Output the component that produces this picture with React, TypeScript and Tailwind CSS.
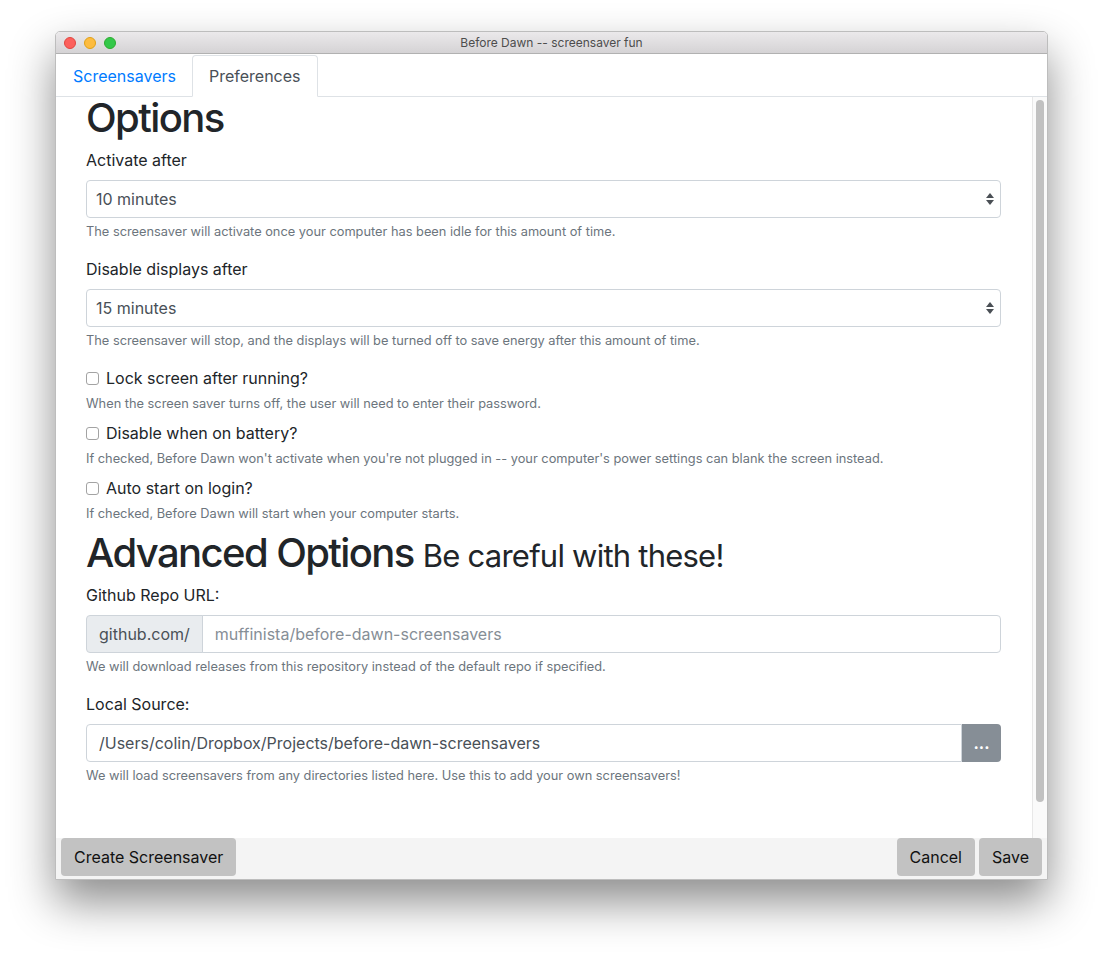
import React from "react";

const font = { fontFamily: "Inter, 'Noto Sans', sans-serif" };

function SelectBox({ value }: { value: string }) {
  return (
    <div className="mt-[8px] flex h-[38px] w-full items-center justify-between rounded-[4px] border border-[#ced4da] bg-white pl-[9px] pr-[4px] text-[16px] text-[#495057]">
      <span>{value}</span>
      <svg width="10" height="14" viewBox="0 0 10 14" className="mr-[1px]">
        <path d="M5 1 L9 6 H1 Z" fill="#4a4f55" />
        <path d="M5 13 L9 8 H1 Z" fill="#4a4f55" />
      </svg>
    </div>
  );
}

function Help({ children }: { children: React.ReactNode }) {
  return <p className="mt-[4px] text-[12.8px] leading-[19px] text-[#6c757d]">{children}</p>;
}

function Check({ label, className }: { label: string; className: string }) {
  return (
    <div className={`flex h-[24px] items-center ${className}`}>
      <span className="h-[13px] w-[13px] rounded-[3px] border border-[#a3a3a3] bg-white" />
      <span className="ml-[7px] text-[16px] leading-6 text-[#212529]">{label}</span>
    </div>
  );
}

function FooterButton({ label }: { label: string }) {
  return (
    <button className="h-[38px] rounded-[4px] bg-[#c2c2c2] px-[13px] text-[16px] text-[#111]">
      {label}
    </button>
  );
}

export default function App() {
  return (
    <div className="h-[959px] w-[1103px] bg-white pl-[55px] pt-[31px]" style={font}>
      <div className="flex h-[849px] w-[993px] flex-col overflow-hidden rounded-t-[5px] border border-[#bdbdbd] bg-white shadow-[0_22px_45px_rgba(0,0,0,0.45)]">
        {/* Title bar */}
        <div className="relative flex h-[22px] shrink-0 items-center justify-center border-b border-[#b1b1b1] bg-gradient-to-b from-[#ebe9eb] to-[#d5d3d5]">
          <div className="absolute left-[8px] top-[5px] flex gap-[8px]">
            <span className="h-[12px] w-[12px] rounded-full border border-[#e2463f] bg-[#fc605c]" />
            <span className="h-[12px] w-[12px] rounded-full border border-[#e1a116] bg-[#fdbc40]" />
            <span className="h-[12px] w-[12px] rounded-full border border-[#2dac2f] bg-[#34c84a]" />
          </div>
          <span className="text-[12px] text-[#4d4d4d]">Before Dawn -- screensaver fun</span>
        </div>

        {/* Tabs */}
        <div className="flex h-[43px] shrink-0 items-end border-b border-[#dee2e6] pl-[1px]">
          <div className="-mb-px flex">
            <div className="flex h-[42px] items-center px-[16px] text-[16px] text-[#007bff]">Screensavers</div>
            <div className="flex h-[42px] items-center rounded-t-[4px] border border-[#dee2e6] border-b-white bg-white px-[16px] text-[16px] text-[#495057]">
              Preferences
            </div>
          </div>
        </div>

        {/* Body */}
        <div className="flex min-h-0 flex-1">
          <div className="flex-1 pl-[30px] pr-[31px] pt-[1px]">
            <h1 className="text-[40px] font-medium leading-[40px] tracking-[-0.04em] text-[#212529]">Options</h1>

            <div className="mt-[10px] text-[16px] leading-6 text-[#212529]">Activate after</div>
            <SelectBox value="10 minutes" />
            <Help>The screensaver will activate once your computer has been idle for this amount of time.</Help>

            <div className="mt-[16px] text-[16px] leading-6 text-[#212529]">Disable displays after</div>
            <SelectBox value="15 minutes" />
            <Help>
              The screensaver will stop, and the displays will be turned off to save energy after this amount of time.
            </Help>

            <Check label="Lock screen after running?" className="mt-[16px]" />
            <Help>When the screen saver turns off, the user will need to enter their password.</Help>
            <Check label="Disable when on battery?" className="mt-[8px]" />
            <Help>
              If checked, Before Dawn won't activate when you're not plugged in -- your computer's power settings can
              blank the screen instead.
            </Help>
            <Check label="Auto start on login?" className="mt-[8px]" />
            <Help>If checked, Before Dawn will start when your computer starts.</Help>

            <h1 className="mt-[10px] text-[40px] font-medium leading-[40px] tracking-[-0.04em] text-[#212529]">
              Advanced Options{" "}
              <span className="text-[31px] font-normal tracking-[-0.025em]">Be careful with these!</span>
            </h1>

            <div className="mt-[7px] text-[16px] leading-6 text-[#212529]">Github Repo URL:</div>
            <div className="mt-[8px] flex h-[38px] w-full">
              <div className="flex items-center rounded-l-[4px] border border-[#ced4da] bg-[#e9ecef] px-[12px] text-[16px] text-[#495057]">
                github.com/
              </div>
              <div className="-ml-px flex flex-1 items-center rounded-r-[4px] border border-[#ced4da] px-[12px] text-[16px] text-[#868e96]">
                muffinista/before-dawn-screensavers
              </div>
            </div>
            <Help>We will download releases from this repository instead of the default repo if specified.</Help>

            <div className="mt-[16px] text-[16px] leading-6 text-[#212529]">Local Source:</div>
            <div className="mt-[8px] flex h-[38px] w-full">
              <div className="flex flex-1 items-center rounded-l-[4px] border border-[#ced4da] px-[12px] text-[16px] text-[#495057]">
                /Users/colin/Dropbox/Projects/before-dawn-screensavers
              </div>
              <div className="flex w-[39px] items-center justify-center rounded-r-[4px] bg-[#868e96] text-[16px] font-bold leading-none text-white">
                ...
              </div>
            </div>
            <Help>We will load screensavers from any directories listed here. Use this to add your own screensavers!</Help>
          </div>

          {/* Scrollbar */}
          <div className="w-[15px] shrink-0 border-l border-[#e8e8e8] bg-[#fafafa] pl-[3px] pt-[3px]">
            <div className="h-[702px] w-[8px] rounded-full bg-[#c1c1c1]" />
          </div>
        </div>

        {/* Footer */}
        <div className="flex h-[41px] shrink-0 items-start justify-between bg-[#f4f4f4] px-[5px]">
          <FooterButton label="Create Screensaver" />
          <div className="flex gap-[4px]">
            <FooterButton label="Cancel" />
            <FooterButton label="Save" />
          </div>
        </div>
      </div>
    </div>
  );
}
